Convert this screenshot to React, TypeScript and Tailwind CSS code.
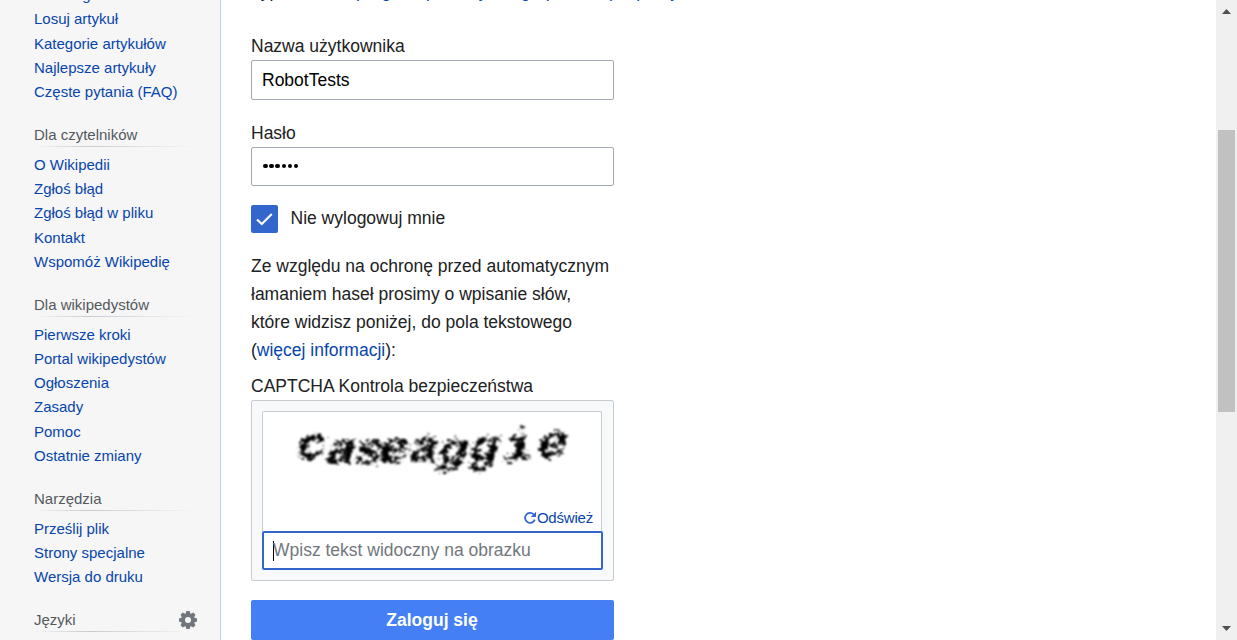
import React from "react";

const sections = [
  { title: "Dla czytelników", items: ["O Wikipedii", "Zgłoś błąd", "Zgłoś błąd w pliku", "Kontakt", "Wspomóż Wikipedię"] },
  { title: "Dla wikipedystów", items: ["Pierwsze kroki", "Portal wikipedystów", "Ogłoszenia", "Zasady", "Pomoc", "Ostatnie zmiany"] },
  { title: "Narzędzia", items: ["Prześlij plik", "Strony specjalne", "Wersja do druku"] },
];

function Links({ items }: { items: string[] }) {
  return (
    <ul>
      {items.map((t) => (
        <li key={t} className="h-[24.25px] leading-[24.25px] text-[#0645ad]">
          <a>{t}</a>
        </li>
      ))}
    </ul>
  );
}

function Heading({ title }: { title: string }) {
  return (
    <>
      <h3 className="h-[22px] leading-[22px] text-[#54595d]">{title}</h3>
      <div className="h-px w-[162px] bg-linear-to-r from-transparent via-[#c8ccd1] via-33% to-transparent" />
    </>
  );
}

function Gear() {
  return (
    <svg width="20" height="20" viewBox="0 0 20 20" fill="none" className="mt-px">
      <g fill="#72777d" transform="translate(10 10)">
        {[0, 45, 90, 135].map((a) => (
          <path key={a} d="M-2.5 -6 L-1.6 -9 H1.6 L2.5 -6 V6 L1.6 9 H-1.6 L-2.5 6Z" transform={`rotate(${a})`} />
        ))}
        <circle r="6.8" />
        <circle r="3" fill="#f6f6f6" />
      </g>
    </svg>
  );
}

const letters = [
  { c: "c", x: 31, y: 48, r: -4 },
  { c: "a", x: 60, y: 50, r: 4 },
  { c: "s", x: 87, y: 51, r: 3 },
  { c: "e", x: 113, y: 51, r: -2 },
  { c: "a", x: 143, y: 50, r: -2 },
  { c: "g", x: 171, y: 50, r: 3 },
  { c: "g", x: 203, y: 50, r: -3 },
  { c: "i", x: 239, y: 50, r: -10 },
  { c: "e", x: 272, y: 46, r: -4 },
];

function Captcha() {
  return (
    <svg width="338" height="90" viewBox="0 0 338 90" className="block">
      <defs>
        <filter id="warp" x="-5%" y="-20%" width="110%" height="140%">
          <feTurbulence type="fractalNoise" baseFrequency="0.22 0.3" numOctaves="2" seed="4" />
          <feDisplacementMap in="SourceGraphic" scale="14" xChannelSelector="R" yChannelSelector="G" />
          <feGaussianBlur stdDeviation="0.8" />
        </filter>
      </defs>
      <g filter="url(#warp)" fontFamily="'Liberation Mono', monospace" fontWeight="700" fontSize="40">
        {letters.map((l, i) => (
          <text key={i} transform={`translate(${l.x} ${l.y}) rotate(${l.r}) skewX(-18) scale(1.24 1.1)`}>{l.c}</text>
        ))}
      </g>
    </svg>
  );
}

export default function App() {
  return (
    <div className="flex h-[640px] w-[1237px] overflow-hidden bg-white font-['Liberation_Sans',Arial,sans-serif] text-[#202122]">
      <nav className="h-full w-[221px] shrink-0 overflow-hidden border-r border-[#a7d7f9] bg-[#f6f6f6] pl-[34px] text-[15px]">
        <div className="-mt-[17px]">
          <Links items={["Strona główna", "Losuj artykuł", "Kategorie artykułów", "Najlepsze artykuły", "Częste pytania (FAQ)"]} />
        </div>
        {sections.map((s) => (
          <section key={s.title} className="pt-[19.6px]">
            <Heading title={s.title} />
            <div className="pt-[5.95px]">
              <Links items={s.items} />
            </div>
          </section>
        ))}
        <section className="flex pt-[19.75px]">
          <div className="w-[144px] overflow-hidden">
            <Heading title="Języki" />
          </div>
          <Gear />
        </section>
      </nav>

      <main className="h-full min-w-0 flex-1 overflow-hidden pl-[30px] text-[17.5px]">
        <p className="-mt-[23px] h-7 whitespace-nowrap leading-7">
          Typ konta na <a className="text-[#0645ad]">program pomocy dla grup oraz opis pracy</a>
        </p>
        <form className="w-[363px]">
          <label className="mt-[27px] block h-7 leading-7">Nazwa użytkownika</label>
          <div className="flex h-10 items-center rounded-[2px] border border-[#a2a9b1] px-[10px] text-black">RobotTests</div>
          <label className="mt-[19px] block h-7 leading-7">Hasło</label>
          <div className="flex h-[39px] items-center gap-[1.7px] rounded-[2px] border border-[#a2a9b1] px-[11px] pb-px">
            {[0, 1, 2, 3, 4, 5].map((i) => (
              <span key={i} className="size-[4.5px] rounded-full bg-black" />
            ))}
          </div>
          <div className="mt-[19px] flex h-7 items-center">
            <span className="flex h-7 w-[27px] items-center justify-center rounded-[2px] bg-[#3366cc]">
              <svg width="17" height="14" viewBox="0 0 17 14" fill="none" stroke="white" strokeWidth="2.1">
                <path d="M1 7.4 5.8 12 15.8 2" />
              </svg>
            </span>
            <span className="-mt-[2px] pl-[12.5px]">Nie wylogowuj mnie</span>
          </div>
          <p className="mt-[19px] whitespace-nowrap leading-7">
            Ze względu na ochronę przed automatycznym<br />
            łamaniem haseł prosimy o wpisanie słów,<br />
            które widzisz poniżej, do pola tekstowego<br />
            (<a className="text-[#0645ad]">więcej informacji</a>):
          </p>
          <label className="mt-2 block h-7 leading-7">CAPTCHA Kontrola bezpieczeństwa</label>
          <div className="h-[181px] rounded-[2px] border border-[#c8ccd1] bg-[#f8f9fa] px-[10px] pt-[10px]">
            <div className="h-[120px] w-[340px] rounded-t-[2px] border border-b-0 border-[#c8ccd1] bg-white">
              <Captcha />
              <div className="flex h-[29px] items-center justify-end pt-[3px] pr-2 text-[15px] tracking-[-0.2px] text-[#0645ad]">
                <svg width="14" height="14" viewBox="0 0 14 14" fill="none">
                  <path d="M10.8 3.5A5 5 0 1 0 11.8 8.6" stroke="#3366cc" strokeWidth="1.8" />
                  <path d="M13 .8V6H7.8Z" fill="#3366cc" />
                </svg>
                Odśwież
              </div>
            </div>
            <div className="flex h-[39px] w-[341px] items-center rounded-[2px] border-2 border-[#3366cc] bg-white pl-[9px] text-[#72777d]">
              <span className="h-5 w-px bg-black" />
              <span className="-ml-px">Wpisz tekst widoczny na obrazku</span>
            </div>
          </div>
          <button type="button" className="mt-[19px] block h-10 w-full rounded-[2px] bg-[#447ff5] pr-px font-bold text-white">Zaloguj się</button>
        </form>
      </main>

      <aside className="flex h-full w-[21px] shrink-0 flex-col items-center bg-[#f0f0f0]">
        <svg width="9" height="5" viewBox="0 0 9 5" className="mt-[9px]" fill="#505050"><path d="M0 5 4.5 0 9 5Z" /></svg>
        <div className="mt-[116px] h-[282px] w-[17px] bg-[#c1c1c1]" />
        <svg width="9" height="5" viewBox="0 0 9 5" className="mt-[214px]" fill="#505050"><path d="M0 0 4.5 5 9 0Z" /></svg>
      </aside>
    </div>
  );
}
